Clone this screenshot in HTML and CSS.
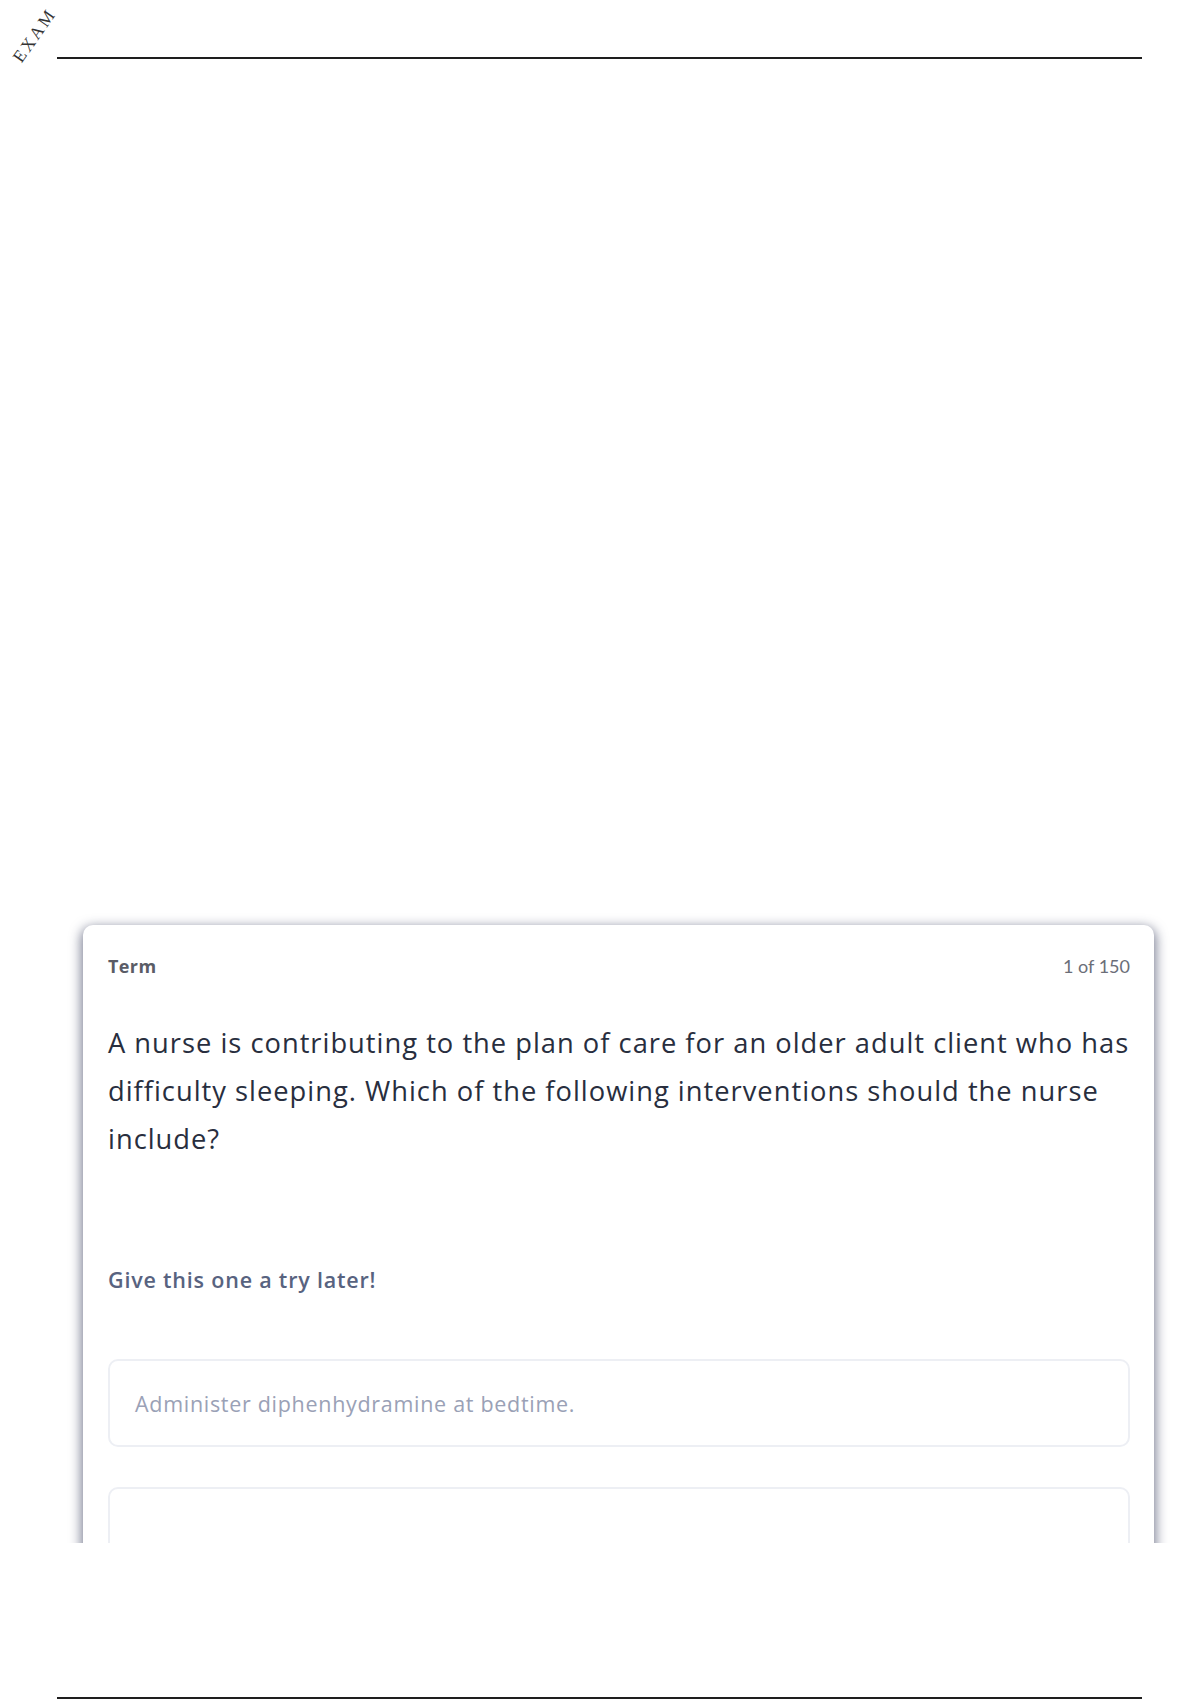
FILE: index.html
```html
<!DOCTYPE html>
<html lang="en">
<head>
<meta charset="utf-8">
<title>Exam</title>
<link rel="stylesheet" href="styles.css">
</head>
<body>
<div class="page">
  <div class="stamp">EXAM</div>
  <div class="rule rule-top"></div>
  <div class="clip">
    <div class="card">
      <div class="card-head">
        <span class="label">Term</span>
        <span class="count">1 of 150</span>
      </div>
      <p class="question">A nurse is contributing to the plan of care for an older adult client who has difficulty sleeping. Which of the following interventions should the nurse include?</p>
      <p class="hint">Give this one a try later!</p>
      <div class="option">Administer diphenhydramine at bedtime.</div>
      <div class="option"></div>
    </div>
  </div>
  <div class="rule rule-bottom"></div>
</div>
</body>
</html>
```

FILE: styles.css
```css
html, body {
  margin: 0;
  padding: 0;
  background: #ffffff;
}

.page {
  position: relative;
  width: 1200px;
  height: 1700px;
  overflow: hidden;
  font-family: "Open Sans", "Lato", sans-serif;
}

.stamp {
  position: absolute;
  left: 4px;
  top: 25px;
  font-family: "Liberation Serif", serif;
  font-size: 17.5px;
  letter-spacing: 2.5px;
  color: #333333;
  transform: rotate(-55deg);
  transform-origin: center;
}

.rule {
  margin-left: 57px;
  width: 1085px;
  height: 2px;
  background: #1e1e1e;
}

.rule-top {
  margin-top: 57px;
}

.clip {
  margin-top: 821px;
  height: 618px;
  padding: 45px 0 0 83px;
  overflow: hidden;
}

.card {
  width: 1071px;
  box-sizing: border-box;
  padding: 28px 24px 40px 25px;
  background: #ffffff;
  border-radius: 10px;
  box-shadow: 0 4px 12px 2px rgba(40, 46, 80, 0.6);
}

.card-head {
  display: flex;
  justify-content: space-between;
  align-items: center;
  height: 26px;
}

.label {
  font-size: 18px;
  font-weight: 700;
  letter-spacing: 0.4px;
  color: #5a5c66;
}

.count {
  font-family: "Lato", sans-serif;
  font-size: 18px;
  color: #6b6e78;
}

.question {
  margin: 40px 0 0 0;
  font-size: 27.3px;
  line-height: 48px;
  letter-spacing: 1px;
  color: #282e3e;
}

.hint {
  margin: 102px 0 0 0;
  font-size: 21.5px;
  line-height: 30px;
  font-weight: 600;
  letter-spacing: 0.8px;
  color: #586380;
}

.option {
  margin-top: 64px;
  height: 88px;
  box-sizing: border-box;
  border: 2px solid #edeff4;
  border-radius: 10px;
  padding: 0 25px;
  display: flex;
  align-items: center;
  font-size: 21.5px;
  letter-spacing: 0.7px;
  color: #9aa1b6;
}

.option + .option {
  margin-top: 40px;
}

.rule-bottom {
  margin-top: 154px;
}
```
